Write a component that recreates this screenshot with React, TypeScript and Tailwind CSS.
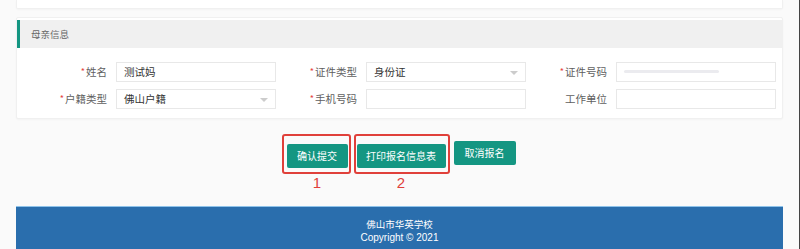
const font = { fontFamily: '"Noto Sans CJK SC", "Noto Sans", sans-serif' };

type Field = {
  label: string;
  required?: boolean;
  value?: string;
  select?: boolean;
  blurred?: boolean;
};

const fields: Field[] = [
  { label: "姓名", required: true, value: "测试妈" },
  { label: "证件类型", required: true, value: "身份证", select: true },
  { label: "证件号码", required: true, blurred: true },
  { label: "户籍类型", required: true, value: "佛山户籍", select: true },
  { label: "手机号码", required: true },
  { label: "工作单位" },
];

const FieldRow = ({ field }: { field: Field }) => (
  <div className="flex items-center">
    <label className="w-[81px] text-right text-[10.5px] text-[#606060] leading-none">
      {field.required && <span className="text-[#e64340] text-[9px] align-top mr-[1px]">*</span>}
      {field.label}
    </label>
    <div className="ml-[9px] relative h-[20px] w-[160px] border border-[#e8e8e8] bg-white flex items-center px-[7px] text-[10.5px] text-[#333]">
      {field.value}
      {field.blurred && <div className="h-[3px] w-[95px] rounded-full bg-[#ebebef]" />}
      {field.select && (
        <span className="absolute right-[7px] top-[8px] w-0 h-0 border-l-[4px] border-r-[4px] border-t-[4px] border-l-transparent border-r-transparent border-t-[#cccccc]" />
      )}
    </div>
  </div>
);

const Btn = ({ children, w }: { children: string; w: string }) => (
  <button className={`h-[24px] ${w} rounded-[2px] bg-[#149682] text-white text-[10px] leading-none`}>
    {children}
  </button>
);

export default function App() {
  return (
    <div className="w-[800px] h-[249px] overflow-hidden bg-[#fafafa] border-r border-[#444] flex flex-col" style={font}>
      {/* end of previous card */}
      <div className="mx-[16px] h-[9px] bg-white border border-t-0 border-[#f0f0f0] rounded-b-[2px] shadow-[0_1px_2px_rgba(0,0,0,0.03)]" />

      {/* mother info card */}
      <div className="mx-[16px] mt-[8px] h-[104px] bg-white border border-[#f0f0f0] rounded-[2px] shadow-[0_1px_2px_rgba(0,0,0,0.03)]">
        <div className="mt-[2px] h-[28px] bg-[#f0f0f0] border-l-[3px] border-[#149682] flex items-center pl-[11px] text-[9.5px] text-[#666]">
          母亲信息
        </div>
        <div className="grid grid-cols-[250px_250px_250px] gap-y-[7px] pl-[9px] pt-[14px]">
          {fields.map((f) => (
            <FieldRow key={f.label} field={f} />
          ))}
        </div>
      </div>

      {/* actions */}
      <div className="mt-[22px] flex justify-center gap-[8px] pl-[3px]">
        <div className="relative">
          <Btn w="w-[61px]">确认提交</Btn>
          <div className="absolute -left-[5px] -right-[3px] -top-[7px] -bottom-[6px] border-2 border-[#e0403a] rounded-[3px]" />
          <div className="absolute left-0 right-0 top-[34px] text-center text-[15px] leading-none text-[#e0403a]" style={{ fontFamily: '"Liberation Sans", sans-serif' }}>1</div>
        </div>
        <div className="relative ml-[1px]">
          <Btn w="w-[89px]">打印报名信息表</Btn>
          <div className="absolute -left-[3px] -right-[4px] -top-[7px] -bottom-[6px] border-2 border-[#e0403a] rounded-[3px]" />
          <div className="absolute left-0 right-0 top-[34px] text-center text-[15px] leading-none text-[#e0403a]" style={{ fontFamily: '"Liberation Sans", sans-serif' }}>2</div>
        </div>
        <Btn w="w-[62px]">取消报名</Btn>
      </div>

      {/* footer */}
      <div className="mx-[16px] mt-[38px] h-[44px] bg-[#2a6ead] border-t border-[#8fc3ea] text-white leading-[13px] text-center pt-[11px]">
        <div className="text-[9.5px]">佛山市华英学校</div>
        <div className="text-[10px]" style={{ fontFamily: '"Liberation Sans", sans-serif' }}>Copyright © 2021</div>
      </div>
    </div>
  );
}
